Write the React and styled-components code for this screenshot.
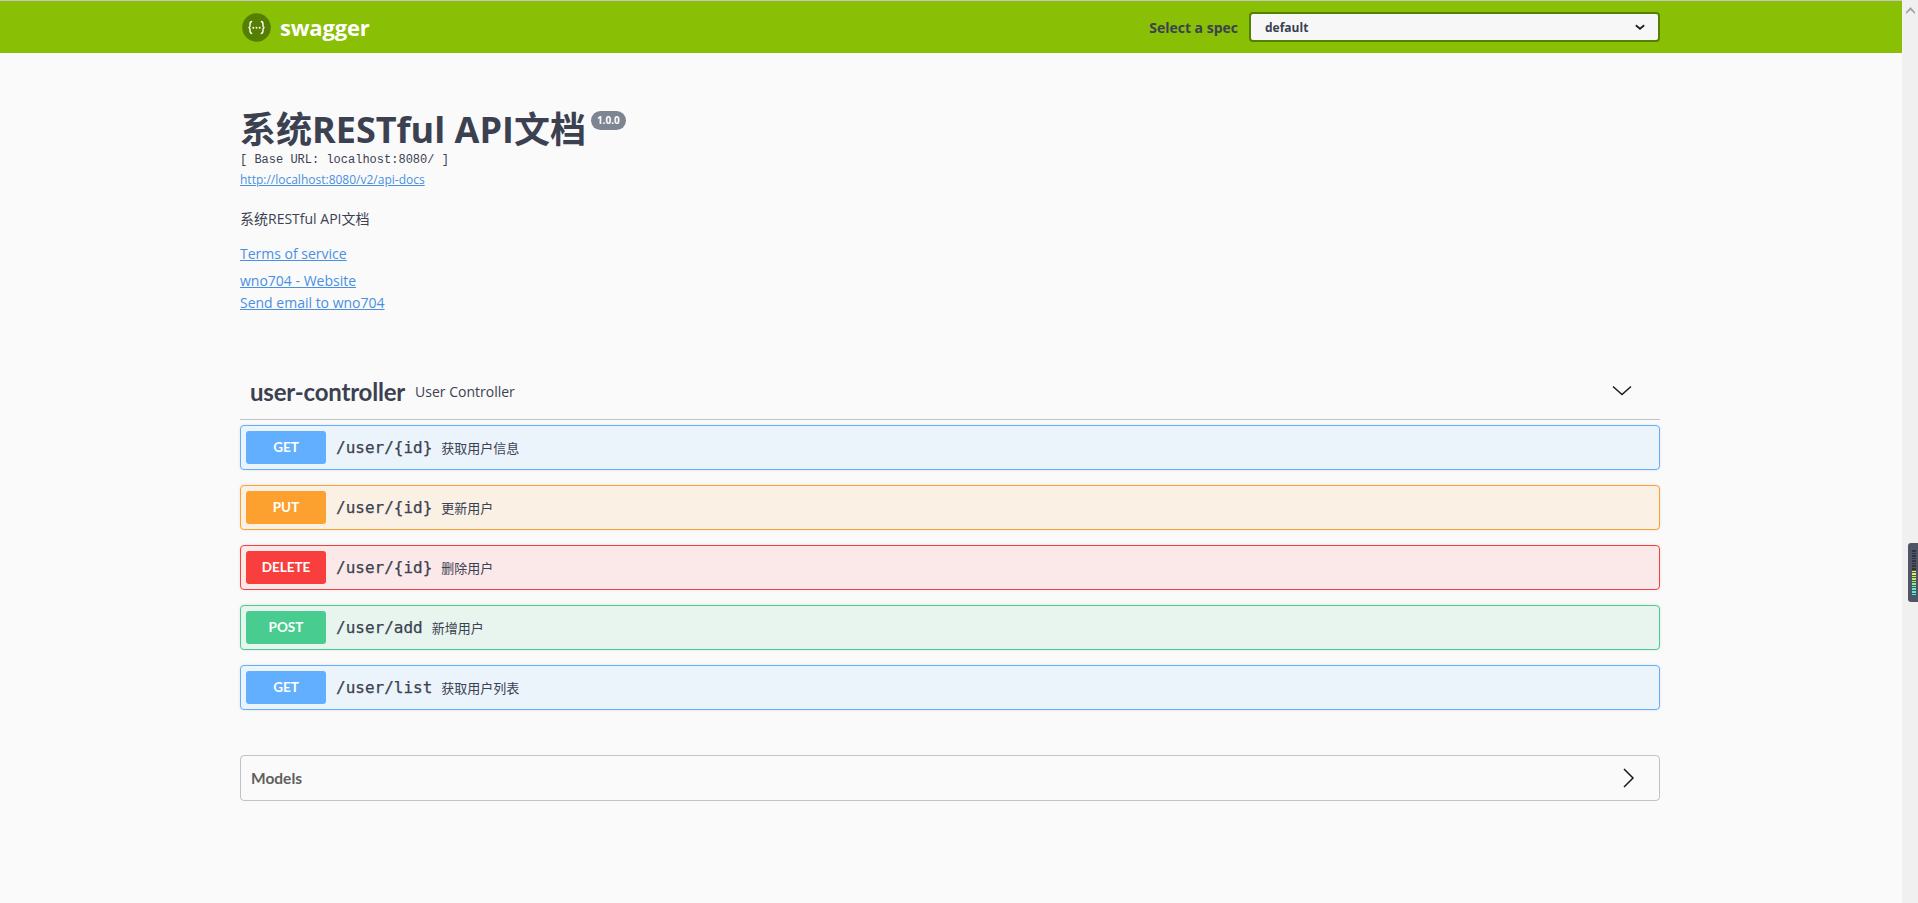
import React from 'react';
import styled, { createGlobalStyle } from 'styled-components';

const GlobalStyle = createGlobalStyle`
  html, body {
    margin: 0;
    height: 100%;
    overflow: hidden;
    background: #fafafa;
  }
`;

const sans = `"Open Sans", "Noto Sans CJK SC", sans-serif`;
const heading = `Lato, "Open Sans", sans-serif`;
const mono = `"DejaVu Sans Mono", "Noto Sans CJK SC", monospace`;

const METHOD_COLORS = {
  GET: { main: '#61affe', tint: '#ebf3fb' },
  PUT: { main: '#fca130', tint: '#faf0e4' },
  DELETE: { main: '#f93e3e', tint: '#fbe8e8' },
  POST: { main: '#49cc90', tint: '#e7f5ee' },
};

// --- Page shell ---
const Page = styled.div`
  display: flex;
  height: 100vh;
  overflow: hidden;
`;

const Main = styled.main`
  flex: 1;
  min-width: 0;
  background: #fafafa;
  color: #3b4151;
  font-family: ${sans};
`;

const Wrapper = styled.div`
  box-sizing: border-box;
  width: 1460px;
  margin-left: 220px;
  padding: 0 20px;
`;

// --- Top bar ---
const Topbar = styled.header`
  height: 52px;
  border-top: 1px solid #c6c6c6;
  background: #89bf04;
`;

const TopbarInner = styled(Wrapper)`
  display: flex;
  align-items: center;
  justify-content: space-between;
  height: 100%;
`;

const Logo = styled.a`
  display: flex;
  align-items: center;
  gap: 9px;
  margin-left: 2px;
  color: #fff;
  font-size: 22px;
  font-weight: 700;
  letter-spacing: -0.2px;
`;

const SpecPicker = styled.label`
  display: flex;
  align-items: center;
  gap: 11px;
  color: #3b4151;
  font-size: 14px;
  font-weight: 700;
`;

const SpecSelect = styled.div`
  box-sizing: border-box;
  display: flex;
  align-items: center;
  justify-content: space-between;
  width: 411px;
  height: 30px;
  padding: 0 12px 0 14px;
  border: 2px solid #547f00;
  border-radius: 4px;
  background: #f7f7f7;
  font-size: 12px;
  font-weight: 700;
`;

// --- Info block ---
const Info = styled.section`
  padding-top: 55px;
`;

const Title = styled.h2`
  display: flex;
  align-items: flex-start;
  margin: 0;
  font-size: 36px;
  line-height: 43px;
  font-weight: 700;
`;

const Version = styled.span`
  margin: 3px 0 0 5px;
  padding: 2px 6px;
  border-radius: 57px;
  background: #7d8492;
  color: #fff;
  font-size: 10px;
  line-height: 15px;
  font-weight: 700;
`;

const BaseUrl = styled.div`
  margin-top: 1px;
  font-family: "Liberation Mono", monospace;
  font-size: 12px;
  line-height: 16px;
`;

const Link = styled.a`
  display: block;
  width: fit-content;
  color: #4990e2;
  text-decoration: underline;
  font-size: ${(p) => p.$size || 14}px;
  line-height: ${(p) => p.$line || 22}px;
  margin-top: ${(p) => p.$top || 0}px;
`;

const Description = styled.p`
  margin: 19px 0 0;
  font-size: 14px;
  line-height: 20px;
`;

// --- Operations ---
const Tag = styled.section`
  margin-top: 51px;
`;

const TagHeader = styled.div`
  box-sizing: border-box;
  display: flex;
  align-items: center;
  height: 55px;
  padding: 0 28px 2px 10px;
  border-bottom: 1px solid rgba(59, 65, 81, 0.3);
`;

const TagName = styled.h4`
  margin: 0;
  font-family: ${heading};
  font-size: 24px;
  font-weight: 700;
  letter-spacing: -0.2px;
`;

const TagNote = styled.small`
  flex: 1;
  padding-left: 10px;
  font-size: 14px;
`;

const Operations = styled.div`
  display: flex;
  flex-direction: column;
  gap: 15px;
  padding-top: 5px;
`;

const OpRow = styled.div`
  box-sizing: border-box;
  display: flex;
  align-items: center;
  height: 45px;
  padding: 0 5px;
  border: 1px solid ${(p) => METHOD_COLORS[p.$method].main};
  border-radius: 4px;
  background: ${(p) => METHOD_COLORS[p.$method].tint};
  box-shadow: 0 0 3px rgba(0, 0, 0, 0.1);
`;

const MethodBadge = styled.span`
  box-sizing: border-box;
  width: 80px;
  height: 33px;
  line-height: 33px;
  border-radius: 3px;
  background: ${(p) => METHOD_COLORS[p.$method].main};
  color: #fff;
  font-family: ${heading};
  font-size: 13.5px;
  font-weight: 700;
  text-align: center;
`;

const OpPath = styled.span`
  padding: 0 9px 0 10px;
  font-family: ${mono};
  font-size: 16px;
  font-weight: 400;
  -webkit-text-stroke: 0.25px #3b4151;
`;

const OpSummary = styled.span`
  font-size: 13px;
`;

// --- Models ---
const Models = styled.section`
  box-sizing: border-box;
  display: flex;
  align-items: center;
  justify-content: space-between;
  height: 46px;
  margin-top: 45px;
  padding: 0 21px 0 10px;
  border: 1px solid rgba(59, 65, 81, 0.3);
  border-radius: 4px;
  color: #606060;
  font-family: ${heading};
  font-size: 15.5px;
  font-weight: 700;
`;

// --- Browser scrollbar and the small overlay widget on top of it ---
const Scrollbar = styled.aside`
  flex: 0 0 16px;
  display: flex;
  justify-content: center;
  align-items: flex-start;
  padding-top: 7px;
  background: #f0f0f0;
`;

const Meter = styled.div`
  box-sizing: border-box;
  position: absolute;
  right: 0;
  top: 543px;
  display: flex;
  flex-direction: column;
  gap: 1px;
  width: 10px;
  height: 59px;
  padding: 7px 2px 7px 4px;
  border-radius: 3px 0 0 3px;
  background: #4f5565;
`;

const MeterTick = styled.span`
  flex: 1;
  background: ${(p) => p.$color};
`;

const OPERATIONS = [
  { method: 'GET', path: '/user/{id}', summary: '获取用户信息' },
  { method: 'PUT', path: '/user/{id}', summary: '更新用户' },
  { method: 'DELETE', path: '/user/{id}', summary: '删除用户' },
  { method: 'POST', path: '/user/add', summary: '新增用户' },
  { method: 'GET', path: '/user/list', summary: '获取用户列表' },
];

const METER_TICKS = [
  ...Array(8).fill('#2f3440'),
  '#f0f040', '#e0f050', '#ccf05c', '#b4f06c', '#9cf07c', '#84f090', '#6cf0a8', '#58f0c0', '#4cf0d0', '#44f0dc',
];

const SwaggerMark = () => (
  <svg width="29" height="29" viewBox="0 0 29 29">
    <circle cx="14.5" cy="14.5" r="14.3" fill="#547f00" />
    <path
      d="M10.2 8.5c-2 0-2.2 1-2.2 2.4v2c0 1-.6 1.5-1.5 1.6 .9.1 1.5.6 1.5 1.6v2c0 1.4.2 2.4 2.2 2.4M18.8 8.5c2 0 2.2 1 2.2 2.4v2c0 1 .6 1.5 1.5 1.6-.9.1-1.5.6-1.5 1.6v2c0 1.4-.2 2.4-2.2 2.4"
      fill="none"
      stroke="#fff"
      strokeWidth="1.4"
    />
    <circle cx="11.3" cy="14.7" r="1" fill="#fff" />
    <circle cx="14.5" cy="14.7" r="1" fill="#fff" />
    <circle cx="17.7" cy="14.7" r="1" fill="#fff" />
  </svg>
);

const Chevron = ({ d, size = 20, strokeWidth = 1.5, color = '#1a1a1a' }) => (
  <svg width={size} height={size} viewBox="0 0 20 20">
    <path d={d} fill="none" stroke={color} strokeWidth={strokeWidth} />
  </svg>
);

const App = () => (
  <Page>
    <GlobalStyle />
    <Main>
      <Topbar>
        <TopbarInner>
          <Logo>
            <SwaggerMark />
            swagger
          </Logo>
          <SpecPicker>
            Select a spec
            <SpecSelect>
              default
              <Chevron d="M3 7l7 6 7-6" size={12} strokeWidth={3} color="#222" />
            </SpecSelect>
          </SpecPicker>
        </TopbarInner>
      </Topbar>
      <Wrapper>
        <Info>
          <Title>
            系统RESTful API文档
            <Version>1.0.0</Version>
          </Title>
          <BaseUrl>[ Base URL: localhost:8080/ ]</BaseUrl>
          <Link $size={12} $line={20} $top={2}>http://localhost:8080/v2/api-docs</Link>
          <Description>系统RESTful API文档</Description>
          <Link $top={14}>Terms of service</Link>
          <Link $top={5}>wno704 - Website</Link>
          <Link>Send email to wno704</Link>
        </Info>
        <Tag>
          <TagHeader>
            <TagName>user-controller</TagName>
            <TagNote>User Controller</TagNote>
            <Chevron d="M1 5.5l9 8 9-8" />
          </TagHeader>
          <Operations>
            {OPERATIONS.map((op) => (
              <OpRow key={op.method + op.path} $method={op.method}>
                <MethodBadge $method={op.method}>{op.method}</MethodBadge>
                <OpPath>{op.path}</OpPath>
                <OpSummary>{op.summary}</OpSummary>
              </OpRow>
            ))}
          </Operations>
        </Tag>
        <Models>
          Models
          <Chevron d="M6 1l9 9-9 9" />
        </Models>
      </Wrapper>
    </Main>
    <Scrollbar>
      <svg width="9" height="7" viewBox="0 0 9 7">
        <path d="M4.5 0L9 5v2L4.5 3 0 7V5z" fill="#a3a3a3" />
      </svg>
    </Scrollbar>
    <Meter>
      {METER_TICKS.map((c, i) => (
        <MeterTick key={i} $color={c} />
      ))}
    </Meter>
  </Page>
);

export default App;
